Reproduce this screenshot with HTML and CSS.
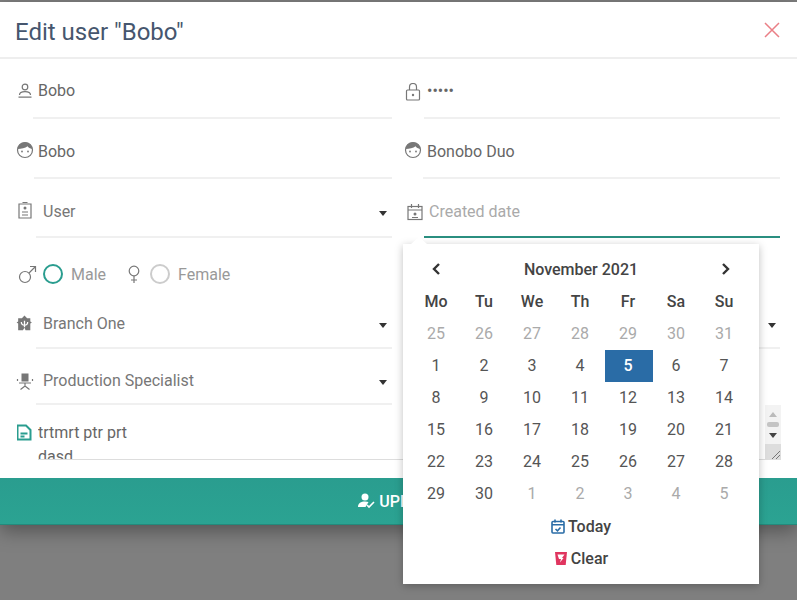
FILE: index.html
```html
<!DOCTYPE html>
<html lang="en">
<head>
  <meta charset="UTF-8" />
  <meta name="viewport" content="width=device-width, initial-scale=1.0"/>
  <title>Edit user</title>
  <link rel="stylesheet" href="styles.css">
</head>
<body>
  <div class="modal">
    <div class="modal-header">
      <h2>Edit user "Bobo"</h2>
      <svg class="close-icon" width="16" height="16" viewBox="0 0 16 16"><path d="M1 1l14 14M15 1L1 15"/></svg>
    </div>

    <div class="modal-body">
      <div class="form-grid">
        <!-- row 1 -->
        <div class="field field-username">
          <svg class="icon" width="16" height="18" viewBox="0 0 16 18"><circle cx="8" cy="6" r="2.8"/><path d="M2.5 14c0-2.500 2-3.400 5.500-3.400s5.500.9 5.500 3.400M1.500 16.200h13"/></svg>
          <div class="value">Bobo</div>
        </div>
        <div class="field field-right">
          <svg class="icon" width="16" height="18" viewBox="0 0 16 18"><rect x="1.500" y="7" width="13" height="10" rx="1"/><path d="M4.500 7V4a3.500 3.500 0 0 1 7 0v3"/><circle class="solid" cx="8" cy="12" r="1.200"/></svg>
          <div class="value value-password">•••••</div>
        </div>

        <!-- row 2 -->
        <div class="field field-name">
          <svg class="icon" width="18" height="18" viewBox="0 0 18 18"><circle cx="9" cy="9" r="7.500"/><path class="solid" d="M1.800 8C2 4 5 1.500 9 1.500S16 4 16.200 8C14 7.500 12.500 6.500 11.500 5.200 9.500 7 5 8 1.800 8z"/><circle class="solid" cx="6" cy="10.500" r=".9"/><circle class="solid" cx="12" cy="10.500" r=".9"/></svg>
          <div class="value">Bobo</div>
        </div>
        <div class="field field-right field-name">
          <svg class="icon" width="18" height="18" viewBox="0 0 18 18"><circle cx="9" cy="9" r="7.500"/><path class="solid" d="M1.800 8C2 4 5 1.500 9 1.500S16 4 16.200 8C14 7.500 12.500 6.500 11.500 5.200 9.500 7 5 8 1.800 8z"/><circle class="solid" cx="6" cy="10.500" r=".9"/><circle class="solid" cx="12" cy="10.500" r=".9"/></svg>
          <div class="value">Bonobo Duo</div>
        </div>

        <!-- row 3 -->
        <div class="field field-select">
          <svg class="icon" width="16" height="18" viewBox="0 0 16 18"><path d="M5.500 1.500h5M2 3h12v14H2z"/><circle class="solid" cx="8" cy="7" r="1.500"/><path d="M5 11h6M5 14h6"/></svg>
          <div class="value">User<span class="caret"></span></div>
        </div>
        <div class="field field-right field-select field-date">
          <svg class="icon" width="16" height="18" viewBox="0 0 16 18"><rect x="1" y="3.500" width="14" height="13"/><path d="M4.500 1v4M11.500 1v4M1 7h14M5 14.500h6"/><circle class="solid" cx="8" cy="11" r="1.500"/></svg>
          <div class="value value-focus">Created date</div>

          <div class="picker">
            <div class="picker-head">
              <svg class="arrow" width="12" height="14" viewBox="0 0 12 14"><path d="M9 2L4 7l5 5"/></svg>
              <span>November 2021</span>
              <svg class="arrow" width="12" height="14" viewBox="0 0 12 14"><path d="M3 2l5 5-5 5"/></svg>
            </div>
            <div class="days">
              <b>Mo</b><b>Tu</b><b>We</b><b>Th</b><b>Fr</b><b>Sa</b><b>Su</b>
              <i>25</i><i>26</i><i>27</i><i>28</i><i>29</i><i>30</i><i>31</i>
              <span>1</span><span>2</span><span>3</span><span>4</span><span class="selected">5</span><span>6</span><span>7</span>
              <span>8</span><span>9</span><span>10</span><span>11</span><span>12</span><span>13</span><span>14</span>
              <span>15</span><span>16</span><span>17</span><span>18</span><span>19</span><span>20</span><span>21</span>
              <span>22</span><span>23</span><span>24</span><span>25</span><span>26</span><span>27</span><span>28</span>
              <span>29</span><span>30</span><i>1</i><i>2</i><i>3</i><i>4</i><i>5</i>
            </div>
            <div class="picker-action">
              <svg class="icon-today" width="14" height="15" viewBox="0 0 14 15"><rect x="1" y="2.500" width="12" height="11.500" rx="1"/><path d="M4 .5v3M10 .5v3M1 5.800h12M4.500 10l2 1.800 3-3.300"/></svg>
              Today
            </div>
            <div class="picker-action">
              <svg class="icon-clear" width="14" height="15" viewBox="0 0 14 15"><path class="fill" d="M1 1h12l-1.300 13H2.300z"/><path d="M3.500 3.500h7l-2.500 3.500h1.500l-3.500 4.500 1-3.500H5z"/></svg>
              Clear
            </div>
          </div>
        </div>

        <!-- row 4 -->
        <div class="field-radios">
          <svg class="icon" width="19" height="19" viewBox="0 0 19 19"><circle cx="7" cy="12" r="5.500"/><path d="M11 8l6.500-6.500M12 1.500h5.500V7"/></svg>
          <span class="radio radio-on"></span>
          <span class="radio-label">Male</span>
          <svg class="icon icon-female" width="14" height="19" viewBox="0 0 14 19"><circle cx="7" cy="6" r="4.800"/><path d="M7 11v7M4 15h6"/></svg>
          <span class="radio"></span>
          <span class="radio-label">Female</span>
        </div>
        <div></div>

        <!-- row 5 -->
        <div class="field field-select field-branch">
          <svg class="icon" width="17" height="19" viewBox="0 0 16 18"><path class="solid" d="M8 1.500l2.500 2.500h3v3l1.500 1-1.500 1v6.500h-4.500L8 13l-1.500 2.500H2V9L.5 8 2 7V4h3.500z"/><path class="cut" d="M8 6.500v6M5 7.500c0 2 1.500 3 3 3s3-1 3-3"/></svg>
          <div class="value">Branch One<span class="caret"></span></div>
        </div>
        <div class="field field-right field-select field-branch">
          <div class="value"><span class="caret"></span></div>
        </div>

        <!-- row 6 -->
        <div class="field field-select field-job">
          <svg class="icon" width="18" height="19" viewBox="0 0 18 18"><rect class="solid" x="5.500" y="1" width="7" height="8"/><path d="M1.500 6.500v2M16.500 6.500v2M3 10.500h12M9 10.500v3M4.500 17L9 13.500l4.500 3.500"/></svg>
          <div class="value">Production Specialist<span class="caret"></span></div>
        </div>
        <div></div>
      </div>

      <div class="notes">
        <svg class="icon-note" width="16" height="17" viewBox="0 0 16 17"><path d="M1.500 1.500h8.500l4.500 4.500v9.500h-13z"/><path d="M4.500 9.500h7M4.500 12.500h4"/></svg>
        <div class="notes-text">trtmrt ptr prt<br>dasd</div>
        <div class="scrollbar">
          <span class="scroll-up"></span>
          <span class="scroll-thumb"></span>
          <span class="scroll-down"></span>
          <svg class="resizer" width="16" height="16" viewBox="0 0 16 16"><path d="M15 7l-8 8M15 11l-4 4"/></svg>
        </div>
      </div>
    </div>

    <div class="modal-footer">
      <svg width="17" height="16" viewBox="0 0 17 16"><circle cx="7" cy="4" r="3.500"/><path d="M0 14c0-4 3-5.500 7-5.500 1.500 0 2.500.2 3.500.6L7.500 14z"/><path class="check" d="M9 12l2 2 5-5"/></svg>
      UPDATE
    </div>
  </div>
</body>
</html>
```

FILE: styles.css
```css
* {
  box-sizing: border-box;
}

body {
  margin: 0;
  height: 600px;
  overflow: hidden;
  padding-top: 2px;
  background-color: #7f7f7f;
  font-family: Roboto, "Liberation Sans", sans-serif;
  font-size: 16px;
  color: #666;
}

.modal {
  background-color: #fff;
  height: 523px;
  display: flex;
  flex-direction: column;
  box-shadow: 0 6px 18px rgba(0, 0, 0, 0.35);
}

.modal-header {
  height: 57px;
  padding: 5px 17px 0 15px;
  display: flex;
  align-items: center;
  justify-content: space-between;
  border-bottom: 2px solid #eee;
}

.modal-header h2 {
  margin: 0;
  font-size: 24px;
  font-weight: 400;
  color: #46566e;
}

.close-icon {
  margin-top: -5px;
}

.close-icon path {
  fill: none;
  stroke: #ea7f86;
  stroke-width: 1.5;
}

.modal-body {
  flex: 1;
}

.form-grid {
  display: grid;
  grid-template-columns: 375px 375px;
  grid-template-rows: 60px 60px 59px 54px 57px 56px;
  column-gap: 13px;
  padding: 0 17px;
}

.field {
  display: flex;
  align-items: flex-end;
  position: relative;
}

.icon {
  flex: none;
  fill: none;
  stroke: #777;
  stroke-width: 1.2;
}

.icon .solid {
  fill: #777;
  stroke: none;
}

.icon .cut {
  stroke: #fff;
}

.value {
  flex: 1;
  position: relative;
  line-height: 20px;
  padding-bottom: 16px;
  border-bottom: 2px solid #f0f0f0;
}

.field > .icon {
  margin-bottom: 18px;
}

/* left edge of the underline differs a little per row */
.field-username .value {
  padding-left: 5px;
}

.field-username .icon {
  margin-bottom: 20px;
}

.field-name .icon {
  margin-left: -1px;
  margin-bottom: 20px;
}

.field-name .value {
  padding-left: 4px;
  padding-bottom: 15px;
}

.field-select .value {
  padding-left: 7px;
  padding-bottom: 14px;
  color: #777;
}

.field-select .icon {
  margin-right: 3px;
  margin-bottom: 19px;
}

.field-right .value-password {
  padding-left: 3px;
  margin-left: 3px;
  font-size: 16px;
}

.field-right.field-name .value {
  margin-left: 1px;
}

.field-branch .value {
  padding-bottom: 13px;
}

.field-branch .icon {
  margin-left: -1px;
  margin-right: 3px;
  margin-bottom: 16px;
}

.field-job .icon {
  margin-left: -1px;
  margin-right: 2px;
  margin-bottom: 14px;
}

.field-job .value {
  padding-bottom: 12px;
}

.field-branch.field-right .value {
  margin-left: 19px;
  height: 36px;
}

.field-date .icon {
  margin-left: 2px;
  margin-right: 1px;
  margin-bottom: 17px;
}

.field-date .value {
  color: #aaa;
  padding-left: 5px;
}

.value-focus {
  border-bottom-color: #2a8f80;
}

.caret {
  position: absolute;
  right: 5px;
  top: 9px;
  border-left: 4px solid transparent;
  border-right: 4px solid transparent;
  border-top: 5px solid #333;
}

.field-right .caret {
  right: 4px;
  top: 10px;
}

.field-radios {
  display: flex;
  align-items: center;
  padding-top: 18px;
  color: #999;
}

.field-radios .icon {
  margin-left: 1px;
}

.field-radios .icon-female {
  margin-left: 21px;
  margin-right: 9px;
}

.radio {
  width: 20px;
  height: 20px;
  margin-left: 6px;
  border: 2px solid #ccc;
  border-radius: 50%;
}

.icon-female + .radio {
  margin-left: 0;
}

.radio-on {
  border-color: #2a9d8f;
}

.radio-label {
  margin-left: 8px;
}

.notes {
  position: relative;
  display: flex;
  align-items: flex-start;
  height: 55px;
  margin-left: 17px;
  margin-right: 16px;
  padding-top: 16px;
  overflow: hidden;
}

.icon-note {
  flex: none;
  margin-top: 3px;
  margin-left: -1px;
  fill: none;
  stroke: #2a9d8f;
  stroke-width: 2;
}

.notes-text {
  margin-left: 6px;
  line-height: 24px;
  height: 39px;
  overflow: hidden;
  flex: 1;
  border-bottom: 1px solid #ddd;
  margin-right: -1px;
}

.scrollbar {
  position: absolute;
  top: 0;
  right: 0;
  bottom: 0;
  width: 16px;
  background-color: #f3f3f3;
}

.scroll-up,
.scroll-down {
  position: absolute;
  left: 4px;
  border-left: 4px solid transparent;
  border-right: 4px solid transparent;
}

.scroll-up {
  top: 7px;
  border-bottom: 5px solid #bbb;
}

.scroll-down {
  top: 28px;
  border-top: 5px solid #444;
}

.scroll-thumb {
  position: absolute;
  top: 17px;
  left: 2px;
  width: 12px;
  height: 5px;
  border-radius: 2px;
  background-color: #c4c4c4;
}

.resizer {
  position: absolute;
  left: 0;
  top: 39px;
  background-color: #ddd;
}

.resizer path {
  fill: none;
  stroke: #777;
  stroke-width: 1;
}

.modal-footer {
  height: 47px;
  display: flex;
  align-items: center;
  justify-content: center;
  gap: 4px;
  background: linear-gradient(#2a9d8f, #2ba392);
  border-bottom: 1px solid #238a7c;
  color: #fff;
  font-weight: 500;
}

.modal-footer svg {
  fill: #fff;
}

.modal-footer .check {
  fill: none;
  stroke: #fff;
  stroke-width: 1.6;
}

/* date picker hangs over the rest of the form */
.picker {
  position: absolute;
  top: calc(100% + 6px);
  left: -2px;
  z-index: 5;
  width: 356px;
  height: 340px;
  padding: 9px;
  background-color: #fff;
  box-shadow: 0 2px 8px rgba(0, 0, 0, 0.25);
}

.picker::before {
  content: "";
  position: absolute;
  top: -7px;
  left: 8px;
  border-left: 8px solid transparent;
  border-right: 8px solid transparent;
  border-bottom: 7px solid #fff;
}

.picker-head {
  height: 33px;
  padding: 0 18px 1px 18px;
  display: flex;
  align-items: center;
  justify-content: space-between;
  font-weight: 500;
  color: #444;
}

.arrow path {
  fill: none;
  stroke: #333;
  stroke-width: 2.4;
}

.days {
  display: grid;
  grid-template-columns: repeat(7, 48px);
  grid-auto-rows: 32px;
  text-align: center;
  line-height: 32px;
  color: #555;
}

.days b {
  font-weight: 500;
  color: #444;
}

.days i {
  font-style: normal;
  color: #aaa;
}

.days .selected {
  margin: 0 -1px 0 1px;
  padding-right: 2px;
  background-color: #2a6ca6;
  color: #fff;
  font-weight: 500;
}

.picker-action {
  height: 32px;
  display: flex;
  align-items: center;
  justify-content: center;
  gap: 3px;
  font-weight: 500;
  color: #444;
}

.icon-today {
  fill: none;
  stroke: #2a6ca6;
  stroke-width: 1.6;
}

.icon-clear path {
  fill: #fff;
}

.icon-clear .fill {
  fill: #e0355f;
}
```
